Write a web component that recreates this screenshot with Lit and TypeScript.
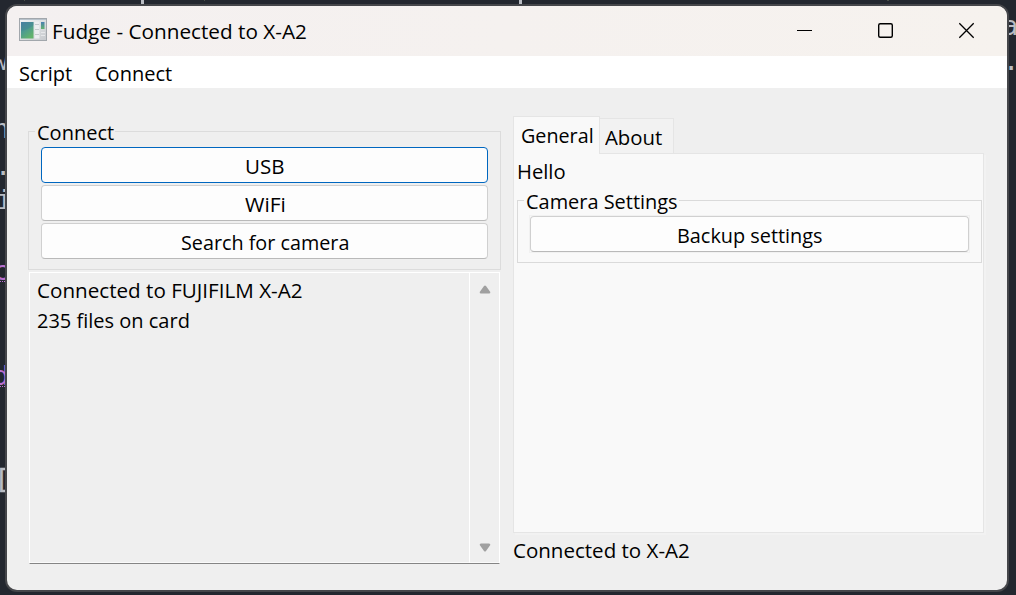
import { LitElement, html, css, svg } from "lit";
import { customElement, property } from "lit/decorators.js";

/** One line of interface text, condensed so that it fills a given advance width. */
@customElement("fit-label")
class FitLabel extends LitElement {
  @property() text = "";
  @property({ type: Number }) fit = 0;
  static styles = css`
    :host { display: block; height: 28px; }
    .box { height: 28px; }
    .run { display: inline-block; white-space: pre; font: 20px/30px "Open Sans", "Noto Sans", sans-serif; color: #000; vertical-align: top; transform-origin: 0 0; }
  `;
  render() {
    return html`<div class="box"><span class="run">${this.text}</span></div>`;
  }
  updated() {
    const box = this.renderRoot.querySelector(".box") as HTMLElement;
    const run = this.renderRoot.querySelector(".run") as HTMLElement;
    const natural = run.offsetWidth;
    run.style.transform = `scaleX(${(this.fit / natural).toFixed(4)})`;
    box.style.width = `${this.fit}px`;
  }
}

const label = (text: string, fit: number) =>
  html`<fit-label .text=${text} .fit=${fit}></fit-label>`;

@customElement("push-button")
class PushButton extends LitElement {
  @property() text = "";
  @property({ type: Number }) fit = 0;
  @property({ type: Boolean, reflect: true }) focused = false;
  static styles = css`
    :host { display: block; }
    button { display: flex; justify-content: center; align-items: flex-start; box-sizing: border-box; width: 100%; height: 36px; margin: 0; padding: 4px 0 0; border: 1px solid #d0d0d0; border-bottom-color: #b9b9b9; border-radius: 4px; background: #fdfdfd; }
    :host([focused]) button { border-color: #0067c0; }
  `;
  render() {
    return html`<button>${label(this.text, this.fit)}</button>`;
  }
}

@customElement("app-root")
class AppRoot extends LitElement {
  static styles = css`
    :host { display: block; position: relative; width: 1016px; height: 595px; overflow: hidden; background: #23272f; }
    .desk { position: absolute; inset: 0; }
    .desk text { font: 27px "DejaVu Sans Mono", monospace; fill: #b9bcc3; }
    .desk .kw { fill: #b970d0; }
    .frame { position: relative; box-sizing: border-box; height: 595px; padding: 6px 9px 5px 7px; }
    .window { display: flex; flex-direction: column; height: 584px; border-radius: 10px; overflow: hidden; background: #efefef; box-shadow: 0 0 0 2px #45464a; }
    .title { display: flex; height: 50px; background: linear-gradient(90deg, #f4f0f0, #f6f2ee); }
    .title .icon { margin: 12px 5px 0 12px; width: 28px; height: 23px; }
    .title fit-label { margin-top: 11px; flex: 1; }
    .controls { display: block; width: 230px; height: 50px; }
    .menu { display: flex; gap: 23px; height: 32px; padding: 3px 0 0 12px; box-sizing: border-box; background: #fff; }
    .body { display: grid; grid-template-columns: 473px 471px; column-gap: 12px; padding: 28px 0 0 21px; }
    .left { padding-top: 15px; }
    .group { position: relative; box-sizing: border-box; border: 1px solid #dcdcdc; display: flex; flex-direction: column; gap: 2px; }
    .group.connect { height: 139px; padding: 15px 12px 0; background: #efefef; }
    .group.camera { height: 63px; margin: 0 1px 0 3px; padding: 14px 11px 0; border-color: #dadada; }
    .legend { position: absolute; top: -14px; left: 6px; padding: 0 1px 0 2px; background: #efefef; }
    .camera .legend { background: #f9f9f9; }
    .halo { border: 1px solid #f1f1f1; }
    .log { display: grid; grid-template-columns: 1fr 30px; box-sizing: border-box; margin: 2px 1px 0; height: 292px; border: 1px solid #fff; border-bottom: 1px solid #858585; box-shadow: inset 0 -1px #fafafa; }
    .lines { display: flex; flex-direction: column; gap: 2px; padding: 3px 0 0 7px; }
    .scroll { display: flex; flex-direction: column; justify-content: space-between; box-sizing: border-box; border-left: 1px solid #fff; padding: 12px 0 11px 8.5px; }
    .scroll svg { display: block; }
    .tabs { display: flex; align-items: flex-end; height: 37px; }
    .tab { box-sizing: border-box; border: 1px solid #e5e5e5; border-bottom: 0; }
    .tab.on { position: relative; z-index: 1; width: 87px; height: 38px; margin-bottom: -1px; padding: 4px 0 0 7px; background: #f9f9f9; }
    .tab.off { width: 75px; height: 35px; margin-left: -1px; padding: 4px 0 0 4.5px; background: #f2f2f2; }
    .panel { box-sizing: border-box; height: 380px; border: 1px solid #e5e5e5; background: #f9f9f9; box-shadow: 2px 2px 0 #f2f2f2; }
    .hello { padding: 3px 0 15px 3px; }
    .status { padding-top: 3px; }
  `;

  private desk() {
    return html`<svg class="desk" width="1016" height="595">
      ${svg`
        <text x="-8" y="70">w</text>
        <text x="-7" y="138">n</text>
        <text x="-5" y="175">.</text>
        <text x="-4" y="209">i</text>
        <text class="kw" x="-7" y="280">c</text>
        <text class="kw" x="-7" y="385">d</text>
        <path d="M0 281.5H7M0 386.5H7" stroke="#b970d0" stroke-dasharray="1 1"/>
        <text x="-6" y="488" stroke="#b9bcc3" stroke-width=".6">[</text>
        <text x="1002" y="35">a</text>
        <text x="1003" y="70">.</text>
        <path d="M142.500 0V5M520.500 0V5" stroke="#b9bcc3" stroke-width="3"/>
        <path d="M24 .5h1M204 .5h1M887 .5h2" stroke="#4a5048"/>`}
    </svg>`;
  }

  private appIcon() {
    return html`<svg class="icon" viewBox="0 0 28 23">
      <defs>
        <linearGradient id="g" x1="0" y1="0" x2=".6" y2="1"><stop offset="0" stop-color="#4d83a6"/><stop offset=".5" stop-color="#4c9a90"/><stop offset="1" stop-color="#62b36c"/></linearGradient>
        <linearGradient id="h" x1="0" y1="0" x2="0" y2="1"><stop offset="0" stop-color="#4a80b2"/><stop offset="1" stop-color="#62b36c"/></linearGradient>
        <linearGradient id="k" x1="0" y1="0" x2="1" y2="1"><stop offset="0" stop-color="#f3f5f6"/><stop offset="1" stop-color="#c6c9cd"/></linearGradient>
      </defs>
      <rect x=".5" y=".5" width="27" height="22" fill="url(#k)" stroke="#a2a7ac"/>
      <path d="M1 1.500H27" stroke="#b8c2cb"/>
      <rect x="2" y="4" width="12.500" height="16.500" fill="url(#g)"/>
      <path d="M2 13Q9 12 14.500 7V4H2Z" fill="#3f7898" opacity=".3"/>
      <rect x="15.500" y="3.500" width="5" height="17" fill="#eceef0"/>
      <path d="M16 6.500h4M16 11.500h4M16 16.500h4" stroke="#c5c9cd"/>
      <rect x="22" y="4" width="3.500" height="7" fill="url(#h)"/>
      <path d="M22 14.500h4M22 17.500h4" stroke="#e6e8ea"/>
    </svg>`;
  }

  render() {
    return html`
      ${this.desk()}
      <div class="frame"><div class="window">
        <div class="title">
          ${this.appIcon()}
          ${label("Fudge - Connected to X-A2", 255)}
          <svg class="controls" viewBox="777 6 230 50" fill="none" stroke="#000">
            <path d="M797 30.500H812"/>
            <rect x="878.700" y="23.700" width="13.600" height="13.600" rx="1.500" stroke-width="1.400"/>
            <path d="M959.300 23.300L973.700 37.700M973.700 23.300L959.300 37.700" stroke-width="1.300"/>
          </svg>
        </div>
        <div class="menu">${label("Script", 53)}${label("Connect", 77)}</div>
        <div class="body">
          <div class="left">
            <div class="group connect">
              <div class="legend">${label("Connect", 77)}</div>
              <push-button focused .text=${"USB"} .fit=${39}></push-button>
              <push-button .text=${"WiFi"} .fit=${41}></push-button>
              <push-button .text=${"Search for camera"} .fit=${168}></push-button>
            </div>
            <div class="log">
              <div class="lines">
                ${label("Connected to FUJIFILM X-A2", 266)}
                ${label("235 files on card", 153)}
              </div>
              <div class="scroll">
                <svg width="12" height="9"><path d="M5 1Q6 0 7 1L11.300 7Q11.500 8.500 10 8.500H2Q.5 8.500.7 7Z" fill="#a0a0a0"/></svg>
                <svg width="12" height="9"><path d="M5 8Q6 9 7 8L11.300 2Q11.500.5 10 .5H2Q.5.5.7 2Z" fill="#a0a0a0"/></svg>
              </div>
            </div>
          </div>
          <div class="right">
            <div class="tabs">
              <div class="tab on">${label("General", 73)}</div>
              <div class="tab off">${label("About", 57)}</div>
            </div>
            <div class="panel">
              <div class="hello">${label("Hello", 48.5)}</div>
              <div class="group camera">
                <div class="legend">${label("Camera Settings", 151.5)}</div>
                <div class="halo"><push-button .text=${"Backup settings"} .fit=${146}></push-button></div>
              </div>
            </div>
            <div class="status">${label("Connected to X-A2", 176.5)}</div>
          </div>
        </div>
      </div></div>
    `;
  }
}
